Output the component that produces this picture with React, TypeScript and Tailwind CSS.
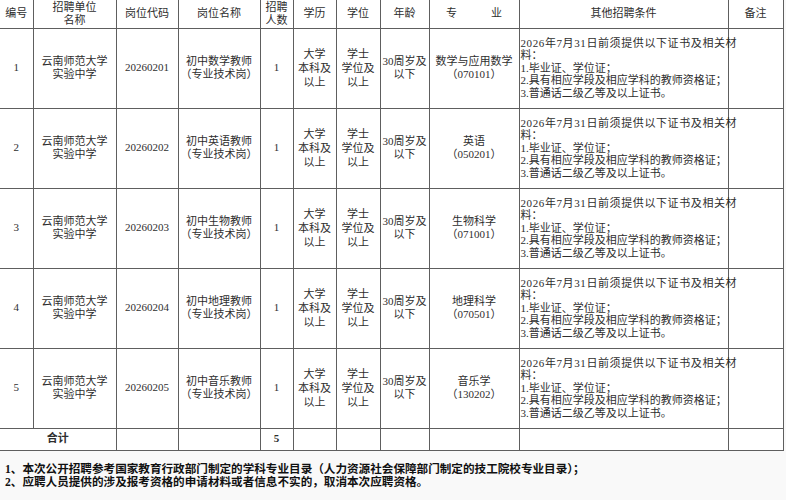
import React from 'react';

const rows = [
  { no: 1, code: '20260201', post: '初中数学教师', major: '数学与应用数学', majorCode: '070101' },
  { no: 2, code: '20260202', post: '初中英语教师', major: '英语', majorCode: '050201' },
  { no: 3, code: '20260203', post: '初中生物教师', major: '生物科学', majorCode: '071001' },
  { no: 4, code: '20260204', post: '初中地理教师', major: '地理科学', majorCode: '070501' },
  { no: 5, code: '20260205', post: '初中音乐教师', major: '音乐学', majorCode: '130202' },
];

const conditions = [
  '1.毕业证、学位证；',
  '2.具有相应学段及相应学科的教师资格证；',
  '3.普通话二级乙等及以上证书。',
];

const cell = 'border border-[#5e5e5e] text-center align-middle p-0';

function Lines({ items, className = '' }: { items: string[]; className?: string }) {
  return (
    <div className={className}>
      {items.map((t, i) => (
        <div key={i} className="whitespace-nowrap">{t}</div>
      ))}
    </div>
  );
}

export default function App() {
  return (
    <div
      className="w-[786px] h-[500px] bg-[#f9f9f9] text-[#2e2e2e] text-[11px] leading-[13.5px] overflow-hidden"
      style={{ fontFamily: '"Liberation Serif", "Noto Sans CJK SC", serif' }}
    >
      <table className="table-fixed border-collapse w-[783px] bg-white">
        <colgroup>
          <col className="w-[33px]" />
          <col className="w-[83px]" />
          <col className="w-[62px]" />
          <col className="w-[82px]" />
          <col className="w-[33px]" />
          <col className="w-[43px]" />
          <col className="w-[44px]" />
          <col className="w-[49px]" />
          <col className="w-[90px]" />
          <col className="w-[209px]" />
          <col className="w-[55px]" />
        </colgroup>
        <thead>
          <tr className="h-[28px]">
            <th className={`${cell} border-l-0 border-t-0 font-normal`}>编号</th>
            <th className={`${cell} border-t-0 font-normal leading-[12.5px]`}>
              <Lines items={['招聘单位', '名称']} />
            </th>
            <th className={`${cell} border-t-0 font-normal`}>岗位代码</th>
            <th className={`${cell} border-t-0 font-normal`}>岗位名称</th>
            <th className={`${cell} border-t-0 font-normal leading-[12.5px]`}>
              <Lines items={['招聘', '人数']} />
            </th>
            <th className={`${cell} border-t-0 font-normal`}>学历</th>
            <th className={`${cell} border-t-0 font-normal`}>学位</th>
            <th className={`${cell} border-t-0 font-normal`}>年龄</th>
            <th className={`${cell} border-t-0 font-normal`}>
              <div className="flex justify-center gap-[34px]">
                <span>专</span>
                <span>业</span>
              </div>
            </th>
            <th className={`${cell} border-t-0 font-normal`}>其他招聘条件</th>
            <th className={`${cell} border-t-0 font-normal`}>备注</th>
          </tr>
        </thead>
        <tbody>
          {rows.map((r) => (
            <tr key={r.no} className="h-[80px]">
              <td className={`${cell} border-l-0`}>{r.no}</td>
              <td className={`${cell} leading-[13px]`}>
                <Lines items={['云南师范大学', '实验中学']} />
              </td>
              <td className={cell}>{r.code}</td>
              <td className={`${cell} leading-[13px]`}>
                <Lines items={[r.post, '（专业技术岗）']} />
              </td>
              <td className={cell}>1</td>
              <td className={`${cell} leading-[14px]`}>
                <Lines items={['大学', '本科及', '以上']} />
              </td>
              <td className={`${cell} leading-[14px]`}>
                <Lines items={['学士', '学位及', '以上']} />
              </td>
              <td className={`${cell} leading-[13px]`}>
                <Lines items={['30周岁及', '以下']} />
              </td>
              <td className={`${cell} leading-[13px]`}>
                <Lines items={[r.major, `（${r.majorCode}）`]} />
              </td>
              <td className={`${cell} text-left leading-[12.5px]`}>
                <div className="pl-[1px]">
                  <div className="whitespace-nowrap tracking-[0.6px]">2026年7月31日前须提供以下证书及相关材</div>
                  <div>料：</div>
                  <Lines items={conditions} />
                </div>
              </td>
              <td className={cell}></td>
            </tr>
          ))}
          <tr className="h-[22px]">
            <td colSpan={2} className={`${cell} border-l-0 font-bold`}>合计</td>
            <td className={cell}></td>
            <td className={cell}></td>
            <td className={`${cell} font-bold`}>5</td>
            <td className={cell}></td>
            <td className={cell}></td>
            <td className={cell}></td>
            <td className={cell}></td>
            <td className={cell}></td>
            <td className={cell}></td>
          </tr>
        </tbody>
      </table>
      <div className="pt-[12px] pl-[5px] font-bold text-[#111] text-[11.6px] leading-[13px]">
        <div className="whitespace-nowrap">
          1、本次公开招聘参考国家教育行政部门制定的学科专业目录（人力资源社会保障部门制定的技工院校专业目录）；
        </div>
        <div className="whitespace-nowrap">
          2、应聘人员提供的涉及报考资格的申请材料或者信息不实的，取消本次应聘资格。
        </div>
      </div>
    </div>
  );
}
